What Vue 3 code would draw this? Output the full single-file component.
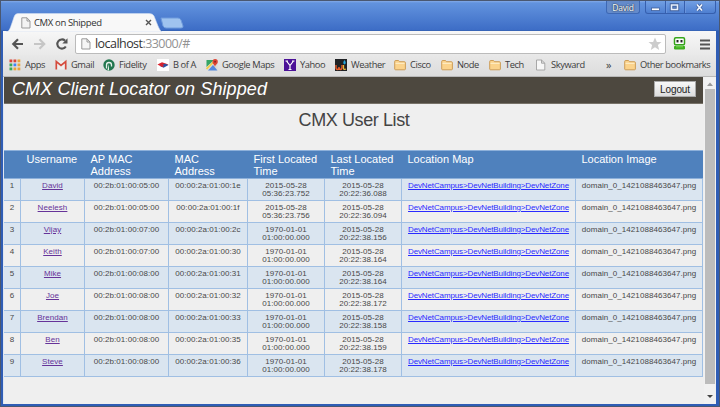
<script setup>
const bookmarks = [
  { icon: 'apps', label: 'Apps' },
  { icon: 'gmail', label: 'Gmail' },
  { icon: 'fidelity', label: 'Fidelity' },
  { icon: 'bofa', label: 'B of A' },
  { icon: 'maps', label: 'Google Maps' },
  { icon: 'yahoo', label: 'Yahoo' },
  { icon: 'weather', label: 'Weather' },
  { icon: 'folder', label: 'Cisco' },
  { icon: 'folder', label: 'Node' },
  { icon: 'folder', label: 'Tech' },
  { icon: 'page', label: 'Skyward' },
  { icon: 'more', label: '»' },
  { icon: 'folder', label: 'Other bookmarks' },
]
const dots = ['#db4437', '#db4437', '#e8a33d', '#3aa757', '#4285f4', '#e8a33d', '#3aa757', '#e8a33d', '#e8a33d']
const headers = ['', 'Username', 'AP MAC\nAddress', 'MAC\nAddress', 'First Located\nTime', 'Last Located\nTime', 'Location Map', 'Location Image']
const users = [
  ['David', '05', '1e', '2015-05-28', '05:36:23.752', '20:22:36.088'],
  ['Neelesh', '05', '1f', '2015-05-28', '05:36:23.756', '20:22:36.094'],
  ['Vijay', '07', '2c', '1970-01-01', '01:00:00.000', '20:22:38.156'],
  ['Keith', '07', '30', '1970-01-01', '01:00:00.000', '20:22:38.164'],
  ['Mike', '08', '31', '1970-01-01', '01:00:00.000', '20:22:38.164'],
  ['Joe', '08', '32', '1970-01-01', '01:00:00.000', '20:22:38.172'],
  ['Brendan', '08', '33', '1970-01-01', '01:00:00.000', '20:22:38.158'],
  ['Ben', '08', '35', '1970-01-01', '01:00:00.000', '20:22:38.159'],
  ['Steve', '08', '36', '1970-01-01', '01:00:00.000', '20:22:38.178'],
]
</script>

<template>
  <div class="window">
    <div class="titlebar">
      <div class="tab">
        <svg class="tab-shape" width="156" height="19" viewBox="0 0 156 19">
          <path d="M0 19 C4 18 4 15 6 10 L8 4 Q9 .5 12 .5 H143 Q147 .5 148 3 L152 13 Q154 18 156 19Z" fill="#f8f8f8" stroke="#cddcf2" stroke-width=".6" />
        </svg>
        <svg class="tab-icon" width="10" height="12" viewBox="0 0 10 12"><path d="M.8.8H6L9 4V11H.8Z" fill="#f3f3f3" stroke="#999" /><path d="M6 .8V4H9" fill="none" stroke="#999" /></svg>
        <span class="tab-title">CMX on Shipped</span>
        <svg class="tab-close" width="7" height="7" viewBox="0 0 7 7"><path d="M1 1L6 6M6 1L1 6" stroke="#555" stroke-width="1.4" /></svg>
      </div>
      <svg class="newtab" width="24" height="12" viewBox="0 0 24 12"><path d="M1 1H18Q20 1 21 3L23 9Q23.500 11 21 11H6Q4 11 3 9Z" fill="#9fc3ef" stroke="#6f9bdc" /></svg>
      <div class="profile">David</div>
      <div class="controls">
        <svg width="69" height="13" viewBox="0 0 69 13">
          <path d="M19.500 0V13M38.500 0V13" stroke="#365fae" />
          <path d="M20.500 0V13M39.500 0V13" stroke="#78a0e0" stroke-width=".6" />
          <rect x="5.500" y="7" width="8" height="2.600" fill="#fff" stroke="#40609c" stroke-width=".8" />
          <path d="M25.500 4H31.500V8.500H25.500Z" fill="none" stroke="#40609c" stroke-width="3.400" />
          <path d="M25.500 4H31.500V8.500H25.500Z" fill="none" stroke="#e8f0fc" stroke-width="1.600" />
          <path d="M51 3.500L56 9.500M56 3.500L51 9.500" stroke="#40609c" stroke-width="3.200" />
          <path d="M51 3.500L56 9.500M56 3.500L51 9.500" stroke="#eef4fd" stroke-width="1.700" />
        </svg>
      </div>
    </div>

    <div class="body">
      <div class="toolbar">
        <svg class="nav" width="64" height="20" viewBox="0 0 64 20">
          <path d="M19 10H9.500M14 5.300L9.300 10L14 14.700" fill="none" stroke="#555" stroke-width="2.200" />
          <path d="M30 10H39.500M35.500 5.300L40.200 10L35.500 14.700" fill="none" stroke="#c6c6c6" stroke-width="2.200" />
          <path d="M61.800 12.500A4.600 4.600 0 1 1 61 6.600" fill="none" stroke="#555" stroke-width="2.100" />
          <path d="M63.500 4.300V9.500H58.300Z" fill="#555" />
        </svg>
        <div class="address">
          <svg width="10" height="12" viewBox="0 0 10 12"><path d="M.8.8H6L9 4V11H.8Z" fill="#f5f5f5" stroke="#999" /><path d="M6 .8V4H9" fill="none" stroke="#999" /></svg>
          <span class="url">localhost<i>:33000/#</i></span>
          <svg width="14" height="14" viewBox="0 0 14 14"><path d="M7 .5L8.900 5H13.500L9.900 8L11.200 13L7 10.200L2.800 13L4.100 8L.5 5H5.100Z" fill="#ccc" /></svg>
        </div>
        <svg class="robo" width="13" height="13" viewBox="0 0 13 13">
          <rect x="1.500" y=".8" width="10" height="7" rx="1.200" fill="#fff" stroke="#35a51b" stroke-width="1.500" />
          <rect x="3.500" y="3" width="2" height="2.400" fill="#222" /><rect x="7.500" y="3" width="2" height="2.400" fill="#222" />
          <rect x="1" y="8.700" width="11" height="3.800" rx="1.200" fill="#3fae20" /><path d="M3 9.800H10" stroke="#7ada55" />
        </svg>
        <svg class="menu" width="10" height="11" viewBox="0 0 10 11"><path d="M0 1.500H10M0 5.500H10M0 9.500H10" stroke="#555" stroke-width="2" /></svg>
      </div>

      <div class="bookmarks">
        <div v-for="b in bookmarks" :key="b.label" class="bookmark" :class="b.icon">
          <svg v-if="b.icon !== 'more'" width="12" height="12" viewBox="0 0 12 12">
            <template v-if="b.icon === 'apps'">
              <rect v-for="(c, i) in dots" :key="i" :x="(i % 3) * 4 + 0.500" :y="Math.floor(i / 3) * 4 + 0.500" width="2.800" height="2.800" :fill="c" />
            </template>
            <template v-else-if="b.icon === 'gmail'">
              <rect x="1" y="2" width="10" height="8.500" fill="#eee" />
              <path d="M1.300 10.500V2.500L6 6.500L10.700 2.500V10.500" fill="none" stroke="#d54b3d" stroke-width="1.700" />
            </template>
            <template v-else-if="b.icon === 'fidelity'">
              <circle cx="6" cy="6" r="5.700" fill="#23774f" />
              <path d="M3.500 9.500V6A2.500 2.500 0 0 1 8.500 6V7.500" fill="none" stroke="#e9f2ec" stroke-width="1.300" />
              <path d="M6 5V11.500L4.500 11Z" fill="#e9f2ec" />
            </template>
            <template v-else-if="b.icon === 'bofa'">
              <rect width="12" height="12" fill="#fff" />
              <path d="M.5 5.500L5 3.200L11.500 5.500L8 7Z" fill="#d8232f" /><path d="M3 7L8 4.800L11.500 6L6.500 8.700Z" fill="#2456a8" /><path d="M.5 5.500L3 4.700L7.500 7L5 8Z" fill="#d8232f" />
            </template>
            <template v-else-if="b.icon === 'maps'">
              <rect x=".5" y="1" width="11" height="10.500" rx="1" fill="#dcdcd5" />
              <path d="M.5 1H8L.5 8Z" fill="#35a566" /><path d="M2 11.500L7 6L11.500 11.500Z" fill="#5588dc" /><path d="M.5 10L9 1.500" stroke="#f4ce46" stroke-width="1.700" />
              <path d="M9 8C8.500 5 6.500 5 6.500 2.700A2.600 2.600 0 0 1 11.800 2.700C11.800 5 9.600 5 9 8Z" fill="#dc4435" /><circle cx="9.100" cy="2.700" r=".9" fill="#862419" />
            </template>
            <template v-else-if="b.icon === 'yahoo'">
              <rect width="12" height="12" fill="#4b1197" /><path d="M2.500 2L6 6.500L9.500 2M6 6V10.500M1.500 2H4M8 2H10.500M4.500 10.500H7.500" fill="none" stroke="#fff" stroke-width="1.200" />
            </template>
            <template v-else-if="b.icon === 'weather'">
              <rect width="12" height="12" fill="#202225" /><path d="M1 6V8.500Q1 10.500 2.500 10.500T4 8Q4 10.500 5.500 10.500T7 8V6" fill="none" stroke="#e85d2b" stroke-width="1.400" />
              <path d="M9.500 1Q12 4.500 9.500 5.500Q7 4.500 9.500 1Z" fill="#25a8df" /><path d="M8.500 6V9.500Q9 11 11 10" fill="none" stroke="#e9bb38" stroke-width="1.300" />
            </template>
            <template v-else-if="b.icon === 'folder'">
              <path d="M.7 10V2.500Q.7 1.500 1.700 1.500H4.500L5.500 2.700H10.300Q11.400 2.700 11.400 3.700V10Q11.400 10.800 10.500 10.800H1.600Q.7 10.800 .7 10Z" fill="#fbd38c" stroke="#c9964d" stroke-width=".9" />
              <path d="M1.500 4.300H10.600" stroke="#fff0cc" />
            </template>
            <path v-else d="M1.500 1H6.500L9.800 4.200V11H1.500ZM6.500 1V4.200H9.800" fill="#f7f7f7" stroke="#a0a0a0" stroke-width=".9" />
          </svg>
          <span>{{ b.label }}</span>
        </div>
      </div>

      <div class="viewport">
        <main class="page">
          <header class="banner">
            <h1>CMX Client Locator on Shipped</h1>
            <button>Logout</button>
          </header>
          <h2>CMX User List</h2>
          <div class="row head">
            <div v-for="(h, i) in headers" :key="i">{{ h }}</div>
          </div>
          <div v-for="(u, i) in users" :key="u[0]" class="row">
            <div>{{ i + 1 }}</div>
            <div><a class="visited">{{ u[0] }}</a></div>
            <div>00:2b:01:00:{{ u[1] }}:00</div>
            <div>00:00:2a:01:00:{{ u[2] }}</div>
            <div>{{ u[3] }}<br>{{ u[4] }}</div>
            <div>2015-05-28<br>{{ u[5] }}</div>
            <div class="map"><a>DevNetCampus&gt;DevNetBuilding&gt;DevNetZone</a></div>
            <div>domain_0_1421088463647.png</div>
          </div>
        </main>
        <div class="scrollbar">
          <svg width="12" height="12" viewBox="0 0 12 12"><path d="M3 9L6 5.500L9 9Z" fill="#999" /></svg>
          <div class="thumb"></div>
          <svg width="12" height="20" viewBox="0 0 12 20"><path d="M3 11L6 14L9 11Z" fill="#444" /></svg>
        </div>
      </div>
    </div>
  </div>
</template>

<style>
body { margin: 0; background: #47536b; }
</style>

<style scoped>
* { box-sizing: border-box; }
svg { display: block; flex: none; }
.window {
  width: 100%; height: 407px; display: flex; flex-direction: column;
  border: 1px solid #4a5871; background: #2f5db5;
  font-family: "Open Sans", "Noto Sans", sans-serif;
}
.body { flex: 1; min-height: 0; display: flex; flex-direction: column; padding: 0 3px 2px 2px; }
.titlebar { height: 30px; display: flex; padding-left: 5px; background: linear-gradient(#82aae8 0, #6293de 2px, #3d6dc6 29px, #315da9 30px); flex: none; }
.tab { position: relative; width: 156px; height: 19px; margin-top: 12px; display: flex; align-items: center; padding: 0 10px 0 15px; }
.tab-shape { position: absolute; left: 0; top: 0; }
.tab-icon, .tab-title, .tab-close { position: relative; }
.tab-title { font-size: 9.500px; letter-spacing: -.36px; margin-left: 3px; color: #333; flex: 1; white-space: nowrap; line-height: 18px; }
.newtab { margin: 16px 0 0 -2px; }
.profile { margin: 0 0 0 auto; width: 34px; height: 13px; border: 1px solid #3d68b5; border-top: 0; border-radius: 0 0 3px 3px; background: #648bcb; color: #fff; text-shadow: 0 0 2px #234, 0 0 1px #234; font-size: 8.500px; letter-spacing: -.2px; line-height: 13px; text-align: center; }
.controls { width: 71px; height: 13px; margin: 0 3px 0 5px; border: 1px solid #365fae; border-top: 0; border-radius: 0 0 3px 3px; background: linear-gradient(#72a0e4, #4e7fd1); overflow: hidden; }
.toolbar { height: 24px; display: flex; background: linear-gradient(#f7f7f7, #e9e9e9); flex: none; }
.nav { margin: 3px 0 0 1px; }
.address { margin: 3px 0 0 7px; width: 591px; height: 20px; border: 1px solid #bbb; border-radius: 2px; background: #fff; display: flex; align-items: center; padding: 0 3px 0 5px; }
.url { margin-left: 4px; font-size: 12.500px; letter-spacing: -.55px; color: #333; flex: 1; line-height: 18px; }
.url i { font-style: normal; color: #929292; }
.robo { margin: 6px 0 0 7px; }
.menu { margin: 8px 0 0 14px; }
.bookmarks { height: 22px; flex: none; display: grid; grid-template-columns: 46px 48px 54px 49px 78px 51px 59px 47px 48px 46px 71px 18px 1fr; padding: 0 0 1px 6px; align-items: center; background: linear-gradient(#e8e8e8, #dcdcdc); border-bottom: 1px solid #b8b8b8; }
.bookmark { display: flex; align-items: center; gap: 4px; font-size: 9.300px; letter-spacing: -.4px; line-height: 18px; color: #3c3c3c; white-space: nowrap; }
.bookmark.more { font-size: 11px; line-height: 16px; }
.viewport { flex: 1; display: flex; min-height: 0; background: #efefef; border-left: 1px solid #dfe6f0; font-family: "Liberation Sans", Arial, sans-serif; }
.page { width: 699px; flex: none; }
.banner { height: 27px; background: #4d483f; border-bottom: 1px solid #777268; display: flex; justify-content: space-between; padding: 0 7px 0 8px; }
h1 { margin: 0; font-weight: 400; font-style: italic; font-size: 18px; letter-spacing: .1px; line-height: 25px; color: #fff; white-space: nowrap; }
button { width: 42px; height: 16px; margin-top: 4px; padding: 0; border: 1px solid #aaa; background: linear-gradient(#f8f8f8, #ddd); font: 10px/13px "Liberation Sans", sans-serif; letter-spacing: -.1px; color: #222; }
h2 { margin: 0; height: 46px; padding: 5px 0 0 1px; font-weight: 400; font-size: 18px; letter-spacing: -.4px; line-height: 22px; color: #444; text-align: center; }
.row { display: grid; grid-template-columns: 17px 64px 84px 79px 77px 77px 174px 127px; height: 22px; font-size: 8px; line-height: 7.500px; color: #484848; text-align: center; letter-spacing: .06px; }
.row > div { padding-top: 3px; border-right: 1px solid #a0bfe3; border-bottom: 1px solid #a0bfe3; white-space: nowrap; }
.row:nth-child(even) > div { background: #dae5f0; }
.row.head { height: 29px; background: #4f81bd; border-top: 1px solid #8db0da; font-size: 11px; line-height: 11.500px; color: #fff; text-align: left; letter-spacing: 0; }
.row.head > div { background: none; border-right: 0; border-bottom: 1px solid #8db0da; white-space: pre; padding: 3px 0 0 5.500px; }
a { color: #2a2aff; text-decoration: underline; }
.map { letter-spacing: -.13px; }
a.visited { color: #663399; }
.scrollbar { margin-left: auto; width: 12px; display: flex; flex-direction: column; background: #f1f1f1; }
.thumb { width: 10px; margin-left: 1px; flex: 1; background: #bcbcbc; }
</style>
